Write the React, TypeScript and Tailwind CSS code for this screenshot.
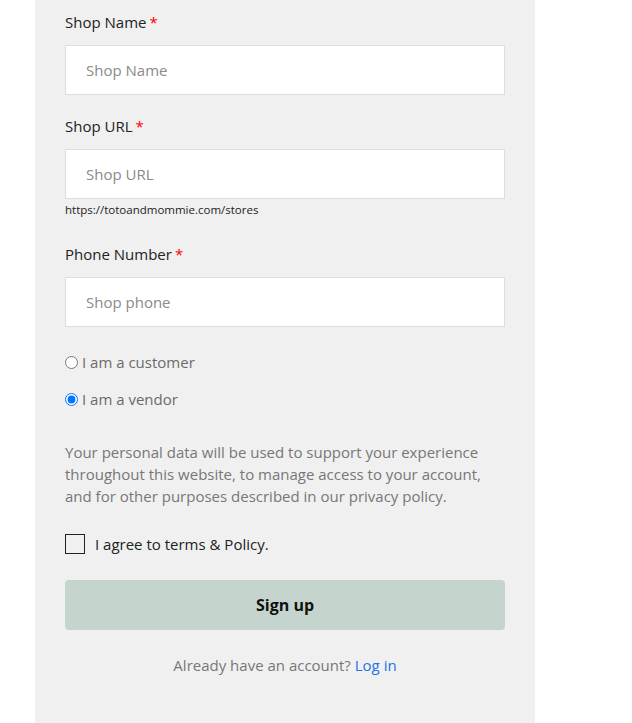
import React from "react";

const font = { fontFamily: '"Open Sans", "Liberation Sans", sans-serif' };

function Label({ children }: { children: React.ReactNode }) {
  return (
    <div className="h-5 leading-5 text-[15px] text-[#222222]">
      {children}
      <span className="text-[#ff0000] ml-[3px]">*</span>
    </div>
  );
}

function Input({ placeholder }: { placeholder: string }) {
  return (
    <input
      className="block w-full h-[50px] bg-white border border-[#dddddd] px-5 text-[15px] text-[#333] placeholder:text-[#8a8a8a] outline-none"
      placeholder={placeholder}
      style={font}
    />
  );
}

export default function App() {
  return (
    <div className="min-h-[723px] bg-white" style={font}>
      <div className="ml-[35px] w-[500px] min-h-[723px] bg-[#f0f0f0] px-[30px] pt-3">
        <Label>Shop Name</Label>
        <div className="mt-[13px]">
          <Input placeholder="Shop Name" />
        </div>
        <div className="mt-[21px]">
          <Label>Shop URL</Label>
        </div>
        <div className="mt-[13px]">
          <Input placeholder="Shop URL" />
        </div>
        <div className="mt-[4px] h-[14px] leading-[14px] text-[11.5px] text-[#222222]">
          https://totoandmommie.com/stores
        </div>
        <div className="mt-[27px]">
          <Label>Phone Number</Label>
        </div>
        <div className="mt-[13px]">
          <Input placeholder="Shop phone" />
        </div>
        <label className="mt-[25px] flex items-center h-5 text-[15px] text-[#6b6b6b]">
          <input type="radio" name="role" className="m-0 w-[13px] h-[13px] mr-[4px]" />
          I am a customer
        </label>
        <label className="mt-[17px] flex items-center h-5 text-[15px] text-[#6b6b6b]">
          <input type="radio" name="role" defaultChecked className="m-0 w-[13px] h-[13px] mr-[4px]" />
          I am a vendor
        </label>
        <p className="mt-[32px] text-[15px] leading-[22px] text-[#777777]">
          Your personal data will be used to support your experience throughout this website, to manage access to your
          account, and for other purposes described in our privacy policy.
        </p>
        <label className="mt-[27px] flex items-center h-5">
          <span className="w-5 h-5 border border-[#222] bg-transparent shrink-0" />
          <span className="ml-[10px] text-[15px] text-[#222222]">I agree to terms &amp; Policy.</span>
        </label>
        <button className="mt-[26px] w-full h-[50px] rounded bg-[#c5d5cd] text-[16px] font-bold text-[#111]">
          Sign up
        </button>
        <div className="mt-[25px] text-center text-[15px] leading-5 text-[#777777]">
          Already have an account? <span className="text-[#1e73e8]">Log in</span>
        </div>
      </div>
    </div>
  );
}
